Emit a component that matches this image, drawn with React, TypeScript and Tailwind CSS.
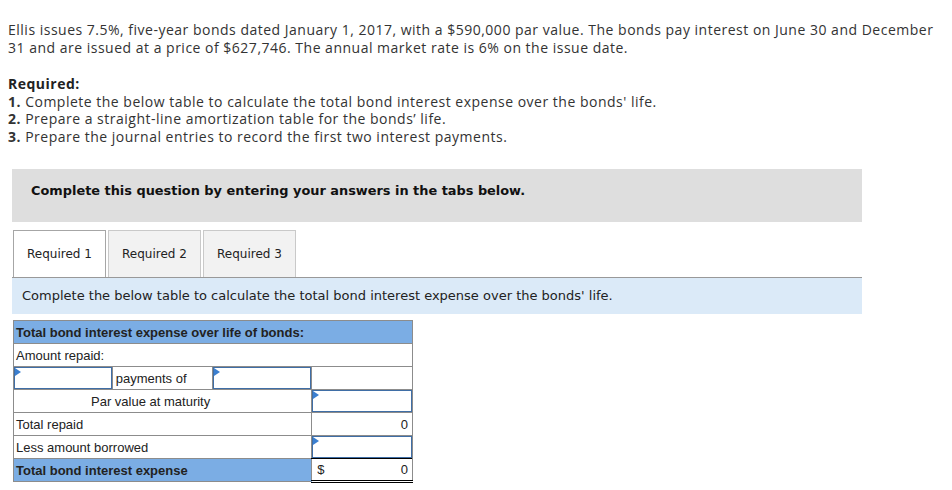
const TABS = [
  { label: 'Required 1', active: true },
  { label: 'Required 2' },
  { label: 'Required 3' },
];

function Flag() {
  return (
    <span className="absolute left-0 top-0 h-0 w-0 border-b-[4px] border-l-[6px] border-t-[4px] border-b-transparent border-l-[#3b7fd0] border-t-transparent" />
  );
}

function InputCell() {
  return (
    <div className="relative h-[22px] w-full border border-[#3f6ea6] bg-white">
      <Flag />
    </div>
  );
}

export default function App() {
  const cell = 'border border-[#8c8c8c] h-[23px] p-0';
  return (
    <div className="min-h-[490px] w-[952px] bg-white text-[#333]">
      <div className="px-2 pt-[21px] font-['Open_Sans',sans-serif] text-[14px] leading-[17.5px] tracking-[0.5px]">
        <p>
          Ellis issues 7.5%, five-year bonds dated January 1, 2017, with a $590,000 par value. The bonds pay interest on June 30 and December
          <br />
          31 and are issued at a price of $627,746. The annual market rate is 6% on the issue date.
        </p>
        <p className="mt-[19px] font-bold text-[#222]">Required:</p>
        <p>
          <b>1.</b> Complete the below table to calculate the total bond interest expense over the bonds' life.
        </p>
        <p>
          <b>2.</b> Prepare a straight-line amortization table for the bonds’ life.
        </p>
        <p>
          <b>3.</b> Prepare the journal entries to record the first two interest payments.
        </p>
      </div>

      <div className="ml-3 mt-[24px] w-[850px] font-['DejaVu_Sans',Verdana,sans-serif]">
        <div className="h-[53px] bg-[#dedede] pl-[19px] pt-[14px] text-[12.9px] font-bold leading-[15px] text-[#111]">
          Complete this question by entering your answers in the tabs below.
        </div>

        <div className="mt-[8px] flex gap-[2px] border-b border-[#999] pl-[1px]">
          {TABS.map((t) => (
            <div
              key={t.label}
              className={`flex h-[47px] w-[93px] items-center justify-center border border-b-0 text-[12px] text-[#222] ${
                t.active ? 'border-[#a6a6a6] bg-white' : 'border-[#c9c9c9] bg-[#f2f2f2]'
              }`}
            >
              {t.label}
            </div>
          ))}
        </div>

        <div className="flex h-[36px] items-center bg-[#dbeaf8] pl-[10px] text-[13px] text-[#222]">
          Complete the below table to calculate the total bond interest expense over the bonds' life.
        </div>
      </div>

      <table className="ml-[13px] mt-[6px] w-[400px] border-collapse font-['Liberation_Sans',Arial,sans-serif] text-[13px] leading-[15px] text-[#222]">
        <colgroup>
          <col className="w-[99px]" />
          <col className="w-[100px]" />
          <col className="w-[100px]" />
          <col className="w-[101px]" />
        </colgroup>
        <tbody>
          <tr>
            <td colSpan={4} className={`${cell} bg-[#7badE4] pl-[2px] font-bold`}>
              Total bond interest expense over life of bonds:
            </td>
          </tr>
          <tr>
            <td colSpan={4} className={`${cell} pl-[2px]`}>
              Amount repaid:
            </td>
          </tr>
          <tr>
            <td className={cell}>
              <InputCell />
            </td>
            <td className={`${cell} pl-[3px]`}>payments of</td>
            <td className={cell}>
              <InputCell />
            </td>
            <td className={cell} />
          </tr>
          <tr>
            <td colSpan={3} className={`${cell} pl-[77px]`}>
              Par value at maturity
            </td>
            <td className={cell}>
              <InputCell />
            </td>
          </tr>
          <tr>
            <td colSpan={3} className={`${cell} pl-[2px]`}>
              Total repaid
            </td>
            <td className={`${cell} border-t-black pr-[4px] text-right`}>0</td>
          </tr>
          <tr>
            <td colSpan={3} className={`${cell} pl-[2px]`}>
              Less amount borrowed
            </td>
            <td className={cell}>
              <InputCell />
            </td>
          </tr>
          <tr>
            <td colSpan={3} className={`${cell} bg-[#7badE4] pl-[2px] font-bold`}>
              Total bond interest expense
            </td>
            <td className="h-[23px] border-x border-t border-b-[3px] border-double border-x-[#8c8c8c] border-b-black border-t-black p-0 pr-[4px]">
              <div className="flex justify-between pl-[5px]">
                <span>$</span>
                <span>0</span>
              </div>
            </td>
          </tr>
        </tbody>
      </table>
    </div>
  );
}
